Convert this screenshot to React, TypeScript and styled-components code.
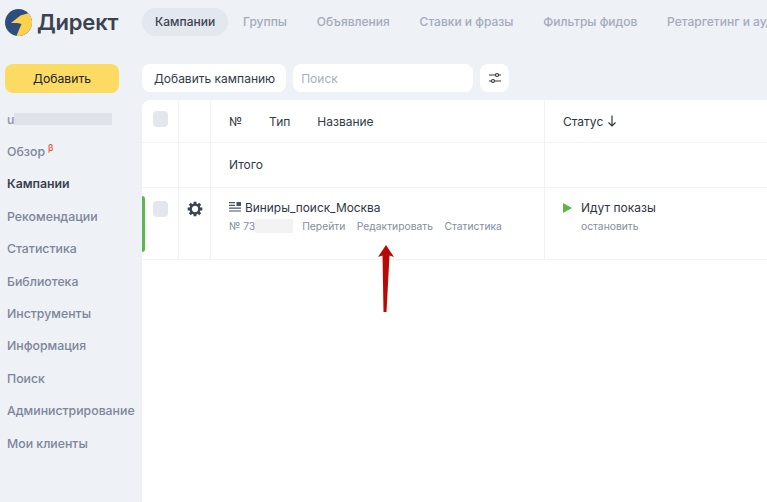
import React from "react";
import styled, { createGlobalStyle } from "styled-components";

const GlobalStyle = createGlobalStyle`
  html, body {
    margin: 0;
    height: 100%;
    background: #eef1f6;
    overflow: hidden;
  }
  body {
    font-family: Inter, "Noto Sans", sans-serif;
    color: #333a45;
  }
`;

const Page = styled.div`
  position: relative;
  width: 767px;
  height: 502px;
  overflow: hidden;
  display: grid;
  grid-template-columns: 142px 1fr;
  grid-template-rows: 100px 1fr;
`;

const LogoCell = styled.div`
  display: flex;
  flex-direction: column;
  padding: 8px 0 0 5px;
`;

const LogoRow = styled.div`
  display: flex;
  align-items: center;
  gap: 5px;
  height: 28px;
`;

const LogoText = styled.span`
  font-size: 22px;
  font-weight: 600;
  letter-spacing: -0.2px;
  color: #3b4250;
`;

const AddButton = styled.button`
  width: 114px;
  height: 29px;
  margin-top: 28px;
  border: 0;
  border-radius: 8px;
  background: #fbdb62;
  font: 12.2px Inter, sans-serif;
  color: #222;
`;

const TopCell = styled.div`
  min-width: 0;
  overflow: hidden;
  padding-top: 8px;
`;

const Tabs = styled.nav`
  display: flex;
  align-items: center;
  height: 28px;
  white-space: nowrap;
`;

const Tab = styled.span<{ $active?: boolean }>`
  flex: none;
  height: 28px;
  line-height: 28px;
  padding: 0 13px;
  margin-right: ${(p) => (p.$active ? 2 : 3.8)}px;
  border-radius: 14px;
  font-size: 12px;
  font-weight: 500;
  color: ${(p) => (p.$active ? "#3b4250" : "#a3abbc")};
  background: ${(p) => (p.$active ? "#e3e7ee" : "transparent")};
`;

const Toolbar = styled.div`
  display: flex;
  gap: 7px;
  margin-top: 28px;
  height: 28px;
`;

const ToolButton = styled.div`
  height: 28px;
  line-height: 29px;
  padding: 0 11px 0 12px;
  border-radius: 8px;
  background: #fff;
  font-size: 12px;
  color: #333a45;
`;

const SearchBox = styled.div`
  width: 172px;
  height: 28px;
  line-height: 29px;
  padding-left: 8px;
  border-radius: 8px;
  background: #fff;
  font-size: 12px;
  color: #a8afbe;
`;

const IconButton = styled.div`
  width: 29px;
  height: 28px;
  border-radius: 8px;
  background: #fff;
  display: flex;
  align-items: center;
  justify-content: center;
`;

const Sidebar = styled.aside`
  padding: 11px 0 0 7px;
  display: flex;
  flex-direction: column;
`;

const UserRow = styled.div`
  display: flex;
  align-items: center;
  height: 16px;
  margin-bottom: 9px;
  font-size: 12.3px;
  font-weight: 500;
  color: #8a93a6;
`;

const Redact = styled.span<{ $w: number; $h: number; $tone: string }>`
  display: inline-block;
  width: ${(p) => p.$w}px;
  height: ${(p) => p.$h}px;
  background: ${(p) => p.$tone};
`;

const NavItem = styled.a<{ $active?: boolean }>`
  height: 32.4px;
  line-height: 32.4px;
  font-size: 12.3px;
  font-weight: ${(p) => (p.$active ? 600 : 500)};
  white-space: nowrap;
  color: ${(p) => (p.$active ? "#3b4250" : "#7d869a")};
`;

const Beta = styled.sup`
  font-size: 9px;
  line-height: 0;
  margin-left: 3px;
  color: #ee4b3e;
`;

const Table = styled.main`
  background: #fff;
  border-top-left-radius: 8px;
  display: flex;
  flex-direction: column;
`;

const Row = styled.div<{ $h: number }>`
  position: relative;
  height: ${(p) => p.$h}px;
  display: grid;
  grid-template-columns: 37px 32px 334px 1fr;
  border-bottom: 1px solid #f1f2f5;
  box-sizing: border-box;
`;

const Cell = styled.div`
  border-right: 1px solid #f1f2f5;
  box-sizing: border-box;
  display: flex;
  align-items: center;
  min-width: 0;
  &:last-child {
    border-right: 0;
  }
`;

const CheckCell = styled(Cell)<{ $top: number }>`
  align-items: flex-start;
  justify-content: center;
  padding-top: ${(p) => p.$top}px;
`;

const Checkbox = styled.div`
  width: 15px;
  height: 16px;
  border-radius: 4px;
  background: #e3e6ed;
`;

const GearCell = styled(Cell)`
  align-items: flex-start;
  justify-content: center;
  padding-top: 13px;
`;

const MainCell = styled(Cell)`
  padding-left: 18px;
  gap: 27px;
  font-size: 12px;
  color: #333a45;
`;

const TotalCell = styled(MainCell)`
  padding-bottom: 2px;
`;

const NameCell = styled(Cell)`
  padding: 11px 0 0 18px;
  flex-direction: column;
  align-items: flex-start;
`;

const NameLine = styled.div`
  display: flex;
  align-items: center;
  gap: 4px;
  height: 16px;
  font-size: 11.9px;
  color: #2f3642;
`;

const MetaLine = styled.div`
  display: flex;
  align-items: center;
  margin-top: 4px;
  height: 14px;
  font-size: 10.3px;
  color: #858da0;
`;

const MetaLinks = styled.div`
  display: flex;
  gap: 11.5px;
  margin-left: 9px;
`;

const StatusCell = styled(Cell)`
  padding-left: 18px;
  font-size: 12px;
  color: #2f3642;
  gap: 4px;
`;

const StatusBody = styled(Cell)`
  padding: 12px 0 0 18px;
  align-items: flex-start;
  gap: 9px;
`;

const PlayIcon = styled.svg`
  margin-top: 3px;
`;

const StatusText = styled.div`
  font-size: 12px;
  line-height: 16px;
  color: #2f3642;
`;

const StatusLink = styled.div`
  margin-top: 3px;
  font-size: 10.3px;
  line-height: 14px;
  color: #858da0;
`;

const ActiveMark = styled.div`
  position: absolute;
  left: 0;
  top: 8px;
  width: 3px;
  height: 56px;
  border-radius: 0 3px 3px 0;
  background: #5cb54d;
`;

const Arrow = styled.svg`
  position: absolute;
  left: 376px;
  top: 244px;
  width: 20px;
  height: 70px;
`;

const tabs = ["Группы", "Объявления", "Ставки и фразы", "Фильтры фидов", "Ретаргетинг и аудитории"];
const nav = ["Рекомендации", "Статистика", "Библиотека", "Инструменты", "Информация", "Поиск", "Администрирование", "Мои клиенты"];

export default function App() {
  return (
    <Page>
      <GlobalStyle />
      <LogoCell>
        <LogoRow>
          <svg width="27" height="27" viewBox="0 0 27 27">
            <circle cx="13.5" cy="13.5" r="13.5" fill="#2f4e7e" />
            <path d="M6 14L15.500 6.500 23.400 4.300A13.500 13.500 0 0 1 11.500 26.850L16.500 15 12.500 14Z" fill="#fbd24e" />
          </svg>
          <LogoText>Директ</LogoText>
        </LogoRow>
        <AddButton>Добавить</AddButton>
      </LogoCell>

      <TopCell>
        <Tabs>
          <Tab $active>Кампании</Tab>
          {tabs.map((t) => (
            <Tab key={t}>{t}</Tab>
          ))}
        </Tabs>
        <Toolbar>
          <ToolButton>Добавить кампанию</ToolButton>
          <SearchBox>Поиск</SearchBox>
          <IconButton>
            <svg width="14" height="14" viewBox="0 0 14 14" fill="none" stroke="#333a45" strokeWidth="1.2">
              <path d="M1 4h6.500M10.500 4H13M1 10h2.500M6.500 10H13" />
              <circle cx="9" cy="4" r="1.500" />
              <circle cx="5" cy="10" r="1.500" />
            </svg>
          </IconButton>
        </Toolbar>
      </TopCell>

      <Sidebar>
        <UserRow>
          u<Redact $w={98} $h={12} $tone="#dfe2e9" />
        </UserRow>
        <NavItem>
          Обзор<Beta>β</Beta>
        </NavItem>
        <NavItem $active>Кампании</NavItem>
        {nav.map((n) => (
          <NavItem key={n}>{n}</NavItem>
        ))}
      </Sidebar>

      <Table>
        <Row $h={43}>
          <CheckCell $top={11}>
            <Checkbox />
          </CheckCell>
          <Cell />
          <MainCell>
            <span>№</span>
            <span>Тип</span>
            <span>Название</span>
          </MainCell>
          <StatusCell>
            Статус
            <svg width="10" height="12" viewBox="0 0 10 12" fill="none" stroke="#2f3642" strokeWidth="1.2">
              <path d="M5 0.500V11M1.500 7.500L5 11 8.500 7.500" />
            </svg>
          </StatusCell>
        </Row>
        <Row $h={45}>
          <Cell />
          <Cell />
          <TotalCell>Итого</TotalCell>
          <Cell />
        </Row>
        <Row $h={72}>
          <ActiveMark />
          <CheckCell $top={13}>
            <Checkbox />
          </CheckCell>
          <GearCell>
            <svg width="16" height="16" viewBox="0 0 24 24" fill="none" stroke="#3b4250">
              <circle cx="12" cy="12" r="6.500" strokeWidth="3.600" />
              <path strokeWidth="4.400" d="M12 1v4M12 19v4M1 12h4M19 12h4M4.200 4.200l2.900 2.900M16.900 16.900l2.900 2.900M4.200 19.800l2.900-2.900M16.900 7.100l2.900-2.900" />
            </svg>
          </GearCell>
          <NameCell>
            <NameLine>
              <svg width="12" height="10" viewBox="0 0 12 10" fill="#4a515e">
                <path d="M0 0h6v1.200H0zM0 2.800h6V4H0zM0 5.600h12v1.200H0zM0 8.400h12v1.200H0zM7.500 0H12v4H7.500z" />
              </svg>
              Виниры_поиск_Москва
            </NameLine>
            <MetaLine>
              № 73
              <Redact $w={38} $h={14} $tone="#f3f3f4" />
              <MetaLinks>
                <span>Перейти</span>
                <span>Редактировать</span>
                <span>Статистика</span>
              </MetaLinks>
            </MetaLine>
          </NameCell>
          <StatusBody>
            <PlayIcon width="9" height="10" viewBox="0 0 9 10">
              <path d="M0 0L9 5 0 10Z" fill="#5cb54d" />
            </PlayIcon>
            <div>
              <StatusText>Идут показы</StatusText>
              <StatusLink>остановить</StatusLink>
            </div>
          </StatusBody>
        </Row>
      </Table>

      <Arrow viewBox="0 0 20 70">
        <path d="M10 1L18 13 13.500 11.500 10.500 68 7.500 68 6.500 11.500 2 13Z" fill="#b80a05" />
      </Arrow>
    </Page>
  );
}
